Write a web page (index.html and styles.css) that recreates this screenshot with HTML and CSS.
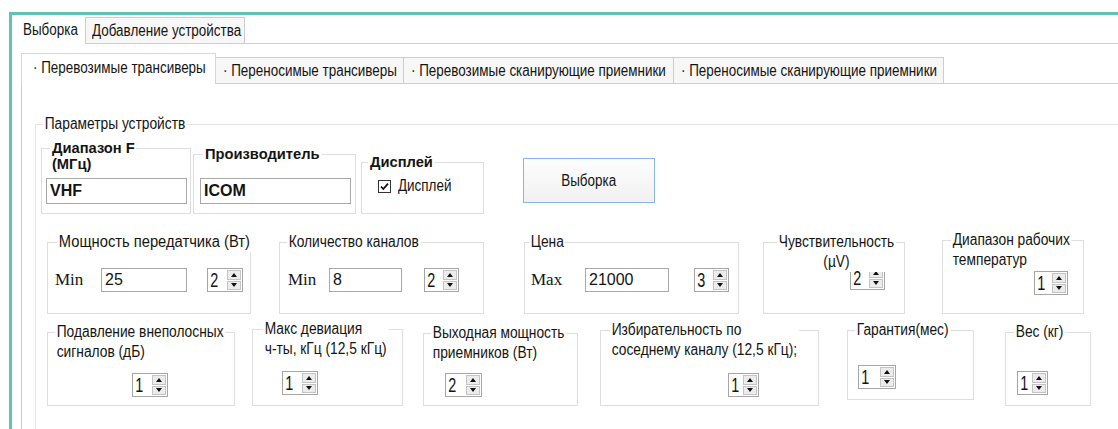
FILE: index.html
```html
<!DOCTYPE html>
<html lang="ru">
<head>
<meta charset="utf-8">
<title>Выборка</title>
<link rel="stylesheet" href="styles.css">
</head>
<body>
<div class="window">
  <div class="tabs outer-tabs">
    <div class="tab outer-tab tab-active outer-active"><span class="tab-label">Выборка</span></div>
    <div class="tab outer-tab"><span class="tab-label">Добавление устройства</span></div>
  </div>
  <div class="outer-page">
    <div class="tabs inner-tabs">
      <div class="tab inner-tab tab-active inner-active"><span class="tab-label">· Перевозимые трансиверы</span></div>
      <div class="tab inner-tab it-2"><span class="tab-label">· Переносимые трансиверы</span></div>
      <div class="tab inner-tab it-3"><span class="tab-label">· Перевозимые сканирующие приемники</span></div>
      <div class="tab inner-tab it-4"><span class="tab-label">· Переносимые сканирующие приемники</span></div>
    </div>
    <div class="inner-page">
      <div class="group g-main">
        <div class="title t-main">Параметры устройств</div>

        <div class="row row-a">
          <div class="group g-band">
            <div class="title title-bold t-band">Диапазон F<br>(МГц)</div>
            <div class="textbox tb-bold tb-band">VHF</div>
          </div>
          <div class="group g-maker">
            <div class="title title-bold t-maker">Производитель</div>
            <div class="textbox tb-bold tb-maker">ICOM</div>
          </div>
          <div class="group g-display">
            <div class="title title-bold t-display">Дисплей</div>
            <label class="check">
              <svg class="check-box" width="13" height="13" viewBox="0 0 13 13">
                <rect x="0.5" y="0.5" width="12" height="12" fill="#fff" stroke="#333"/>
                <path d="M3 6.5 L5.3 9 L10 3.6" fill="none" stroke="#111" stroke-width="1.8"/>
              </svg>
              <span class="check-label">Дисплей</span>
            </label>
          </div>
          <button class="btn-select" type="button"><span class="btn-label">Выборка</span></button>
        </div>

        <div class="row row-b">
          <div class="group g-power">
            <div class="title t-power">Мощность передатчика (Вт)</div>
            <div class="controls">
              <span class="mm mm-power">Min</span>
              <div class="textbox tb-power">25</div>
              <div class="spin sp-power"><span class="spin-val">2</span><span class="spin-btns"><i class="up"></i><i class="down"></i></span></div>
            </div>
          </div>
          <div class="group g-channels">
            <div class="title t-channels">Количество каналов</div>
            <div class="controls">
              <span class="mm mm-channels">Min</span>
              <div class="textbox tb-channels">8</div>
              <div class="spin sp-channels"><span class="spin-val">2</span><span class="spin-btns"><i class="up"></i><i class="down"></i></span></div>
            </div>
          </div>
          <div class="group g-price">
            <div class="title t-price">Цена</div>
            <div class="controls">
              <span class="mm mm-price">Max</span>
              <div class="textbox tb-price">21000</div>
              <div class="spin sp-price"><span class="spin-val">3</span><span class="spin-btns"><i class="up"></i><i class="down"></i></span></div>
            </div>
          </div>
          <div class="group g-sens">
            <div class="title t-sens">Чувствительность<br>(µV)</div>
            <div class="spin sp-sens"><span class="spin-val">2</span><span class="spin-btns"><i class="up"></i><i class="down"></i></span></div>
          </div>
          <div class="group g-temp">
            <div class="title t-temp">Диапазон рабочих<br>температур</div>
            <div class="spin sp-temp"><span class="spin-val">1</span><span class="spin-btns"><i class="up"></i><i class="down"></i></span></div>
          </div>
        </div>

        <div class="row row-c">
          <div class="group g-reject">
            <div class="title t-reject">Подавление внеполосных<br>сигналов (дБ)</div>
            <div class="spin sp-reject"><span class="spin-val">1</span><span class="spin-btns"><i class="up"></i><i class="down"></i></span></div>
          </div>
          <div class="group g-dev">
            <div class="title t-dev">Макс девиация<br>ч-ты, кГц (12,5 кГц)</div>
            <div class="spin sp-dev"><span class="spin-val">1</span><span class="spin-btns"><i class="up"></i><i class="down"></i></span></div>
          </div>
          <div class="group g-out">
            <div class="title t-out">Выходная мощность<br>приемников (Вт)</div>
            <div class="spin sp-out"><span class="spin-val">2</span><span class="spin-btns"><i class="up"></i><i class="down"></i></span></div>
          </div>
          <div class="group g-sel">
            <div class="title t-sel">Избирательность по<br>соседнему каналу (12,5 кГц);</div>
            <div class="spin sp-sel"><span class="spin-val">1</span><span class="spin-btns"><i class="up"></i><i class="down"></i></span></div>
          </div>
          <div class="group g-warr">
            <div class="title t-warr">Гарантия(мес)</div>
            <div class="spin sp-warr"><span class="spin-val">1</span><span class="spin-btns"><i class="up"></i><i class="down"></i></span></div>
          </div>
          <div class="group g-weight">
            <div class="title t-weight">Вес (кг)</div>
            <div class="spin sp-weight"><span class="spin-val">1</span><span class="spin-btns"><i class="up"></i><i class="down"></i></span></div>
          </div>
        </div>
      </div>
    </div>
  </div>
</div>
</body>
</html>
```

FILE: styles.css
```css
* { box-sizing: border-box; }

html, body {
  margin: 0;
  width: 1118px;
  height: 429px;
  overflow: hidden;
  background: #fff;
}

body {
  font-family: "Liberation Sans", Arial, sans-serif;
  font-size: 16px;
  color: #141414;
}

/* the WinForms font is tall and narrow: squeeze label text horizontally */
.tab-label,
.btn-label,
.check-label {
  display: inline-block;
  transform: scaleX(0.84);
  transform-origin: 0 50%;
  white-space: nowrap;
}

/* window frame */
.window {
  margin: 12px 0 0 9px;
  height: 417px;
  border-top: 3px solid #5cc5b5;
  border-left: 3px solid #5cc5b5;
}

/* tab strips */
.tabs {
  display: flex;
  align-items: flex-end;
  white-space: nowrap;
}

.tab {
  display: flex;
  align-items: center;
  background: #f7f7f7;
  border: 1px solid #cdcdcd;
  border-bottom: none;
}

.tab-active {
  position: relative;
  z-index: 1;
  background: #fff;
  margin-bottom: -1px;
}

.outer-tabs {
  height: 29px;
  border-bottom: 1px solid #cfcfcf;
}

.outer-tab {
  height: 26px;
  width: 160px;
  padding-left: 6px;
}

.outer-active {
  height: 29px;
  width: 73px;
  padding-left: 10px;
  border-color: transparent;
}

.outer-page {
  padding: 9px 0 0 9px;
}

.inner-tabs {
  height: 31px;
  border-bottom: 1px solid #cfcfcf;
}

.inner-tab {
  height: 26px;
  padding-left: 7px;
  margin-left: -1px;
}

.inner-active {
  height: 31px;
  width: 195px;
  margin-left: 0;
  padding-left: 11px;
  padding-bottom: 2px;
  border-color: #d6d6d6;
}

.it-2 { width: 189px; }
.it-3 { width: 271px; }
.it-4 { width: 271px; }

.inner-page {
  height: 345px;
  overflow: hidden;
  padding: 40px 0 0 13px;
  border-left: 1px solid #c8c8c8;
}

/* group boxes */
.group {
  border: 1px solid #dedede;
  flex: none;
}

.title {
  width: fit-content;
  background: #fff;
  padding: 0 2px;
  margin-top: -11px;
  line-height: 20px;
  white-space: nowrap;
  transform: scaleX(0.86);
  transform-origin: 0 0;
}

.title-bold {
  font-weight: bold;
  font-size: 15px;
  line-height: 16px;
  margin-top: -9px;
  transform: scaleX(0.98);
}

.g-main {
  width: 1120px;
  height: 320px;
  border-color: #e6e6e6;
}

.t-main { margin-left: 7px; }

.row {
  display: flex;
  align-items: flex-start;
}

/* first row: band, maker, display, button */
.row-a {
  margin-top: 14px;
  align-items: flex-end;
}

.g-band { margin-left: 5px; width: 150px; height: 66px; }
.g-maker { margin-left: 2px; width: 163px; height: 60px; }
.g-display { margin-left: 5px; width: 123px; height: 52px; }

.t-band { margin-left: 8px; }
.t-maker { margin-left: 9px; }
.t-display { margin-left: 6px; }

.textbox {
  height: 24px;
  border: 1px solid #a9a9a9;
  background: #fff;
  padding-left: 3px;
  line-height: 22px;
  font-size: 16px;
}

.tb-bold {
  height: 26px;
  line-height: 24px;
  font-weight: bold;
}

.tb-band { margin: 6px 0 0 4px; width: 141px; }
.tb-maker { margin: 16px 0 0 6px; width: 151px; }

.check {
  display: flex;
  align-items: center;
  gap: 7px;
  height: 16px;
  margin: 8px 0 0 16px;
}

.check-box { flex: none; }

.btn-select {
  margin: 0 0 11px 39px;
  width: 132px;
  height: 45px;
  border: 1px solid #86b7e0;
  background: linear-gradient(#fdfdfd, #f1f1f1);
  font: inherit;
  color: #141414;
  padding: 0;
}

.btn-label { transform-origin: 50% 50%; }

/* second row */
.row-b { margin-top: 28px; }

.g-power { margin-left: 11px; width: 204px; height: 72px; }
.g-channels { margin-left: 28px; width: 205px; height: 72px; }
.g-price { margin-left: 40px; width: 215px; height: 72px; }
.g-sens { margin-left: 24px; width: 142px; height: 72px; }
.g-temp { margin: -2px 0 0 37px; width: 142px; height: 74px; }

.t-power { margin-left: 9px; transform: scaleX(0.92); }
.t-channels { margin-left: 7px; }
.t-price { margin-left: 4px; }
.t-sens { margin-left: 13px; text-align: center; }
.t-temp { margin-left: 8px; }

.controls {
  display: flex;
  align-items: center;
  margin-top: 16px;
  height: 24px;
}

.mm {
  font-family: "Liberation Serif", "Times New Roman", serif;
  font-size: 17px;
  flex: none;
}

.mm-power { margin-left: 7px; width: 46px; }
.mm-channels { margin-left: 8px; width: 41px; }
.mm-price { margin-left: 6px; width: 54px; }

.tb-power { width: 86px; }
.tb-channels { width: 73px; }
.tb-price { width: 84px; }

/* numeric up-down */
.spin {
  display: flex;
  width: 35px;
  height: 24px;
  border: 1px solid #a6a6a6;
  background: #fff;
  flex: none;
}

.spin-val {
  flex: 1;
  padding-left: 3px;
  font-size: 20px;
  line-height: 22px;
  transform: scaleX(0.72);
  transform-origin: 0 50%;
}

.spin-btns {
  width: 15px;
  display: flex;
  flex-direction: column;
  padding: 1px 1px 1px 0;
  gap: 1px;
}

.spin-btns i {
  flex: 1;
  display: flex;
  align-items: center;
  justify-content: center;
  background: #ececec;
  border: 1px solid #c4c4c4;
}

.spin-btns i::before {
  content: "";
  border-left: 3px solid transparent;
  border-right: 3px solid transparent;
}

.spin-btns .up::before { border-bottom: 4px solid #111; }
.spin-btns .down::before { border-top: 4px solid #111; }

.sp-power { margin-left: 20px; width: 36px; }
.sp-channels { margin-left: 22px; }
.sp-price { margin-left: 25px; }
.sp-sens { margin: -6px 0 0 86px; }
.sp-temp { margin: 1px 0 0 91px; width: 34px; }

/* third row */
.row-c { margin-top: 15px; }

.g-reject { margin: 3px 0 0 11px; width: 188px; height: 74px; }
.g-dev { margin: 0 0 0 17px; width: 151px; height: 77px; }
.g-out { margin: 4px 0 0 20px; width: 155px; height: 73px; }
.g-sel { margin: 1px 0 0 22px; width: 219px; height: 76px; }
.g-warr { margin: 1px 0 0 28px; width: 127px; height: 70px; }
.g-weight { margin: 3px 0 0 31px; width: 86px; height: 74px; }

.t-reject { margin-left: 7px; }
.t-dev { margin-left: 10px; }
.t-out { margin-left: 7px; }
.t-sel { margin-left: 9px; }
.t-warr { margin-left: 7px; }
.t-weight { margin-left: 8px; }

.sp-reject { margin: 11px 0 0 84px; width: 36px; }
.sp-dev { margin: 12px 0 0 29px; width: 36px; }
.sp-out { margin: 10px 0 0 21px; width: 37px; }
.sp-sel { margin: 13px 0 0 127px; width: 31px; }
.sp-warr { margin: 25px 0 0 10px; width: 38px; }
.sp-weight { margin: 29px 0 0 11px; width: 31px; }
```
